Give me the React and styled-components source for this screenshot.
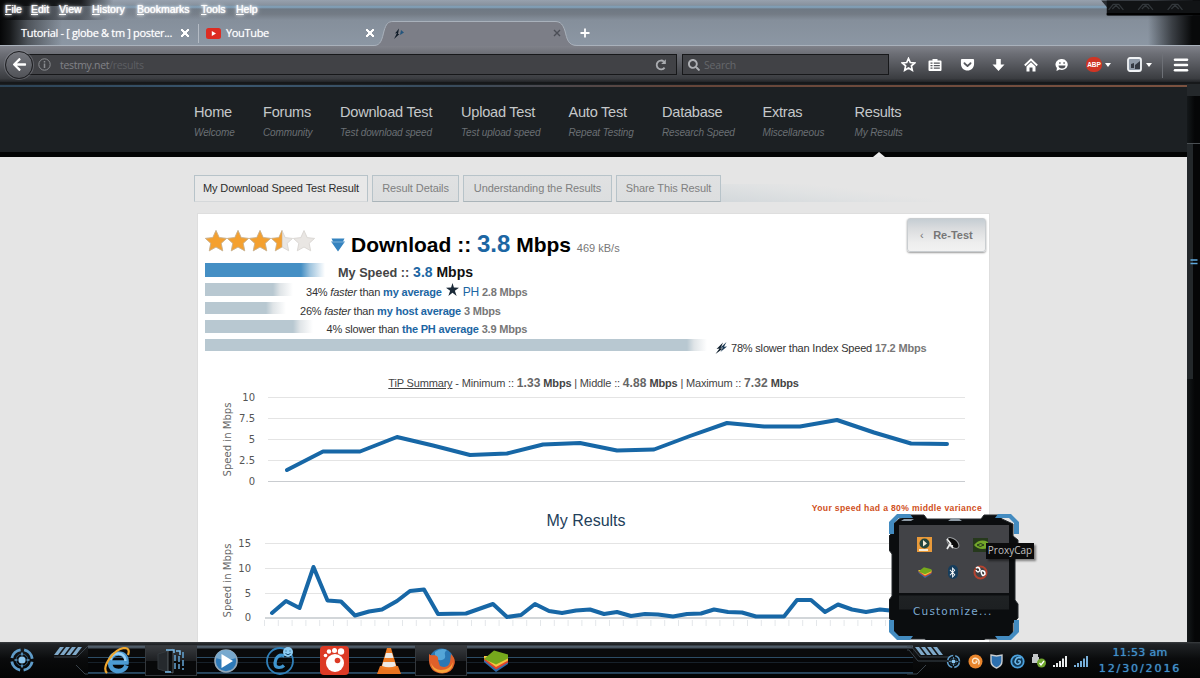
import React from 'react';
import styled, { createGlobalStyle } from 'styled-components';
import { Menu } from 'lucide-react';
import { FaArrowLeft, FaGetPocket, FaBluetoothB, FaSearch } from 'react-icons/fa';

const menus = [
  ['File', 26],
  ['Edit', 28],
  ['View', 33],
  ['History', 45],
  ['Bookmarks', 64],
  ['Tools', 35],
  ['Help', 30],
];

const navItems = [
  ['Home', 'Welcome'],
  ['Forums', 'Community'],
  ['Download Test', 'Test download speed'],
  ['Upload Test', 'Test upload speed'],
  ['Auto Test', 'Repeat Testing'],
  ['Database', 'Research Speed'],
  ['Extras', 'Miscellaneous'],
  ['Results', 'My Results'],
];

const speedPoints =
  '287,73 323,54.5 360,54.5 397,40 433,48.5 470,58 507,56.5 543,47.5 580,46 617,53.5 654,52.5 690,39 727,26 764,29.5 800,29.5 837,23 874,35.5 911,46.5 947,47';

const historyPoints =
  '272,73 286,61 299.5,68 313.5,27 327.5,60.5 341,61.5 355,75.5 369,71.5 382,69.5 397,61 410,51 424,49.5 438,74 466,73.5 493,64 507,77 521,75 535,64 549,71 562,73 576,70.5 590,69.5 604,74 617,72 631,76 645,74 658,74.5 673,76.5 687,74 701,73.5 714,69.5 728,72 742,72.5 756,76.5 784,76.5 797,60 811,60 825,72 838,64.5 852,69.5 866,72 880,69.5 895,71';

const TestIcon = ({ size = 12 }) => (
  <svg width={size} height={size} viewBox='0 0 12 12'>
    <path d='M8 0.5 L1.5 7 L4.5 6.5 L0.5 12 L8 6.5 L5.5 6.5 Z' fill='#10202e' />
    <path d='M11.5 0 L5 6 L8 5.6 L5.5 10 L12 4.6 L9 4.8 Z' fill='#1b3a55' />
  </svg>
);

const starPath = 'M11 0.5 L14.2 7.6 L21.6 8.4 L16.2 13.3 L17.7 20.8 L11 17 L4.3 20.8 L5.8 13.3 L0.4 8.4 L7.8 7.6 Z';
const thinStarPath = 'M11 0 L13.4 7.8 L22 8 L15 13 L18 22 L11 16.4 L4 22 L7 13 L0 8 L8.6 7.8 Z';

const Star = ({ fill }) => (
  <svg width='22' height='22' viewBox='0 0 22 22'>
    <path d={starPath} fill='#e9e6e3' stroke='#d6d2ce' strokeWidth='0.8' />
    {fill === 1 && <path d={starPath} fill='#f4a02f' stroke='#c9b08b' strokeWidth='0.8' />}
    {fill === 0.5 && (
      <path d='M11 0.5 L7.8 7.6 L0.4 8.4 L5.8 13.3 L4.3 20.8 L11 17 Z' fill='#f4a02f' stroke='#c9b08b' strokeWidth='0.6' />
    )}
  </svg>
);

const TargetIcon = ({ size }) => (
  <svg width={size} height={size} viewBox='0 0 26 26' fill='none'>
    <circle cx='13' cy='13' r='10.3' stroke='#5f9cc9' strokeWidth='2.8' strokeDasharray='12.6 3.6' strokeDashoffset='-1.8' />
    <circle cx='13' cy='13' r='6' stroke='#29597c' strokeWidth='1' />
    <circle cx='13' cy='13' r='3.6' fill='#8cc6ee' />
    <path d='M13 5.5v3M13 17.5v3M5.5 13h3M17.5 13h3' stroke='#5f9cc9' strokeWidth='1.6' />
  </svg>
);

const BlueStacks = ({ width, height }) => (
  <svg width={width} height={height} viewBox='0 0 26 22' preserveAspectRatio='none'>
    <path d='M1 12 L13 22 L25 14 V10 L1 8 Z' fill='#2f6aa8' />
    <path d='M1 10 L13 19.5 L25 12.5 V8 L1 7 Z' fill='#e2432a' />
    <path d='M1 8 L13 17 L25 10.5 V6 L1 6 Z' fill='#f4c542' />
    <path d='M1 9 L11 0.5 L25 4.5 V8.5 L13 14.5 Z' fill='#76a91c' />
  </svg>
);

const Signal = ({ color }) => (
  <svg width='14' height='11' viewBox='0 0 14 11' fill={color}>
    <path d='M0 9h2v2h-2zM3 7h2v4h-2zM6 5h2v6h-2zM9 2.5h2v8.5h-2zM12 0h2v11h-2z' />
  </svg>
);

const App = () => {
  return (
    <>
      <GlobalStyle />
      <Desktop>
        <TitleArea>
          <MenuBar>
            {menus.map(([label, width]) => (
              <MenuItem key={label} $width={width}>
                <u>{label[0]}</u>
                {label.slice(1)}
              </MenuItem>
            ))}
          </MenuBar>
          <WindowButtons>
            <svg width='104' height='16' viewBox='0 0 104 16'>
              <path d='M0 0h104v16H12V8L5 0z' transform='translate(-8 0)' fill='#2b2f34' />
              <path d='M3 0h101v16H3z' fill='#111315' />
              <path d='M3 14.5h101' stroke='#000' strokeWidth='2' />
              <g fill='none' stroke='#32373b' strokeWidth='1.4'>
                <path d='M5 10l5-6h6l5 6M37 10l5-6h6l5 6M69 10l5-6h6l5 6' />
                <path d='M9 9l4-4 4 4M41 9l4-4 4 4M73 9l4-4 4 4' />
              </g>
            </svg>
          </WindowButtons>
          <TabStrip>
            <BrowserTab $width={198} $left={21} $right={9}>
              <TabLabel>Tutorial - [ globe &amp; tm ] poster...</TabLabel>
              <CloseMark />
            </BrowserTab>
            <TabDivider />
            <BrowserTab $width={175} $left={7} $right={0}>
              <svg width='15' height='11' viewBox='0 0 15 11'>
                <rect width='15' height='11' rx='2.5' fill='#dd2c22' />
                <path d='M5.8 3 L10 5.5 L5.8 8 Z' fill='#fff' />
              </svg>
              <TabLabel $gap={5}>YouTube</TabLabel>
              <CloseMark />
            </BrowserTab>
            <ActiveTab>
              <svg width='208' height='26' viewBox='0 0 208 26'>
                <path d='M0 25.5 C7 25.5 8 19 10 11 C12 4 14 1.5 19 1.5 H181 C187 1.5 189 5 191 11 C193 19 194 25.5 203 25.5 H208 V26 H0 Z' fill='#7c7e87' />
                <path d='M0 25.500 C7 25.500 8 19 10 11 C12 4 14 1.500 19 1.500 H181 C187 1.500 189 5 191 11 C193 19 194 25.500 203 25.500 H208' fill='none' stroke='#a9b1bb' />
                <path d='M7 .5L3 5.500 5 5 2 11 7.500 6 6 6z' transform='translate(18 8)' fill='#111c28' />
                <path d='M9 2l3 2.500L8 7z' transform='translate(18 8)' fill='#24557d' />
                <path d='M180 10l6 6M186 10l-6 6' stroke='#4b4e56' strokeWidth='1.4' />
              </svg>
            </ActiveTab>
            <NewTab>
              <svg width='10' height='10' viewBox='0 0 10 10'>
                <path d='M5 0.5v9M0.5 5h9' stroke='#fff' strokeWidth='1.8' />
              </svg>
            </NewTab>
          </TabStrip>
        </TitleArea>

        <Toolbar>
          <BackButton>
            <FaArrowLeft size={15} />
          </BackButton>
          <AddressBar>
            <svg width='13' height='13' viewBox='0 0 13 13' fill='none' stroke='#8b8d91'>
              <circle cx='6.5' cy='6.5' r='5.7' />
              <path d='M6.5 5.5v4.5M6.5 3v1.4' strokeWidth='1.5' />
            </svg>
            <Address>
              testmy.net<span>/results</span>
            </Address>
            <svg width='12' height='12' viewBox='0 0 12 12' fill='none' stroke='#aaacb0' strokeWidth='1.8'>
              <path d='M9.6 8.6 A4.4 4.4 0 1 1 9 2.6' />
              <path d='M10.8 0.3v4.6H6.2z' fill='#aaacb0' stroke='none' />
            </svg>
          </AddressBar>
          <SearchBar>
            <FaSearch size={12} color='#aeb0b4' />
            <span>Search</span>
          </SearchBar>
          <ToolIcons>
            <svg width='15' height='15' viewBox='0 0 15 15' fill='none' stroke='#fff' strokeWidth='1.7'>
              <path d='M7.5 1.5 L9.3 5.5 L13.6 6 L10.4 8.9 L11.3 13.2 L7.5 11 L3.7 13.2 L4.6 8.9 L1.4 6 L5.7 5.5 Z' />
            </svg>
            <svg width='14' height='14' viewBox='0 0 14 14'>
              <path d='M1.5 2.5h3V1h5v1.5h3q1 0 1 1v8.5q0 1-1 1h-11q-1 0-1-1v-8.5q0-1 1-1z' fill='#fff' />
              <path d='M2.5 5.2h2M2.5 7.7h2M2.5 10.2h2M5.8 5.2h6M5.8 7.7h6M5.8 10.2h6' stroke='#54565b' strokeWidth='1.2' />
            </svg>
            <FaGetPocket size={15} />
            <svg width='13' height='14' viewBox='0 0 13 14'>
              <path d='M4.2 1h4.6v5.500H12.500L6.500 13 0.500 6.500h3.700z' fill='#fff' />
            </svg>
            <svg width='14' height='14' viewBox='0 0 14 14'>
              <path d='M0.800 7.500L7 1.500l6.200 6' fill='none' stroke='#fff' strokeWidth='1.900' />
              <path d='M2.500 8.500L7 4.300l4.500 4.200V13.500H8.500V9.500h-3v4h-3z' fill='#fff' />
            </svg>
            <svg width='14' height='14' viewBox='0 0 14 14'>
              <path d='M7 1a6 5.5 0 1 1-2.5 10.6L1.5 13l.4-3A5.7 5.5 0 0 1 7 1z' fill='#fff' />
              <path d='M4.2 4.2h1.4v1.600h-1.400zM8.400 4.200h1.400v1.600h-1.400zM3.500 7.500h7a3.500 3 0 0 1-7 0z' fill='#4f5156' />
            </svg>
          </ToolIcons>
          <AdBlock>ABP</AdBlock>
          <Caret $left={3} />
          <AddonBox>
            <svg width='15' height='15' viewBox='0 0 15 15'>
              <rect x='1' y='1' width='13' height='13' rx='2' fill='#8f9aa8' stroke='#f1f3f5' strokeWidth='1.8' />
              <path d='M4 7l3-1v5H4zM8 8l5-4v8H8z' fill='#343a44' />
            </svg>
          </AddonBox>
          <Caret $left={4} />
          <ToolDivider />
          <Menu size={18} strokeWidth={3.4} />
        </Toolbar>

        <Viewport>
          <Page>
            <SiteHeader>
              {navItems.map(([title, hint]) => (
                <NavItem key={title}>
                  <NavTitle>{title}</NavTitle>
                  <NavHint>{hint}</NavHint>
                  {title === 'Results' && <Pointer />}
                </NavItem>
              ))}
            </SiteHeader>

            <ResultTabs>
              <ResultTab $active $width={174}>My Download Speed Test Result</ResultTab>
              <ResultTab $width={87}>Result Details</ResultTab>
              <ResultTab $width={149}>Understanding the Results</ResultTab>
              <ResultTab $width={105}>Share This Result</ResultTab>
              <TabShade />
            </ResultTabs>

            <Card>
              <ScoreRow>
                <Stars>
                  {[1, 1, 1, 0.5, 0].map((fill, i) => (
                    <Star key={i} fill={fill} />
                  ))}
                </Stars>
                <DownArrow width='14' height='14' viewBox='0 0 14 14'>
                  <path d='M0.5 0.5h13l-1.5 3h2L7 13.5L0 3.5h2z' fill='#3583bf' />
                  <path d='M1 4h12' stroke='#8fbde0' strokeWidth='0.8' />
                </DownArrow>
                <Score>
                  Download :: <b>3.8</b> Mbps <small>469 kB/s</small>
                </Score>
                <Retest>
                  <i>‹</i>Re-Test
                </Retest>
              </ScoreRow>
              <MySpeed>
                <Bar $width={120} $main />
                <MySpeedText>
                  <span>My Speed ::</span> <em>3.8</em> Mbps
                </MySpeedText>
              </MySpeed>
              <Compare>
                <Bar $width={88} />
                <CompareText $left={13}>
                  34% <i>faster</i> than <b>my average</b>
                  <svg width='13' height='13' viewBox='0 0 22 22'>
                    <path d={thinStarPath} fill='#1b2a38' />
                  </svg>
                  <a>PH</a> <strong>2.8 Mbps</strong>
                </CompareText>
              </Compare>
              <Compare>
                <Bar $width={81} />
                <CompareText $left={14}>
                  26% <i>faster</i> than <b>my host average</b> <strong>3 Mbps</strong>
                </CompareText>
              </Compare>
              <Compare>
                <Bar $width={108} />
                <CompareText $left={13.5}>
                  4% slower than <b>the PH average</b> <strong>3.9 Mbps</strong>
                </CompareText>
              </Compare>
              <Compare>
                <Bar $width={502} />
                <IndexIcon>
                  <TestIcon />
                </IndexIcon>
                <CompareText $left={4}>
                  78% slower than Index Speed <strong>17.2 Mbps</strong>
                </CompareText>
              </Compare>

              <Summary>
                <u>TiP Summary</u> - Minimum :: <b>1.33</b> <strong>Mbps</strong> | Middle :: <b>4.88</b>{' '}
                <strong>Mbps</strong> | Maximum :: <b>7.32</b> <strong>Mbps</strong>
              </Summary>

              <Chart width='791' height='98' viewBox='198 -5 791 98'>
                <path d='M268 0.5H965M268 21.5H965M268 42.5H965M268 63.5H965' stroke='#e4e4e4' />
                <path d='M268 84.5H965' stroke='#c9ccd0' />
                <ChartLabel x='255' y='4'>10</ChartLabel>
                <ChartLabel x='255' y='25'>7.5</ChartLabel>
                <ChartLabel x='255' y='46'>5</ChartLabel>
                <ChartLabel x='255' y='67'>2.5</ChartLabel>
                <ChartLabel x='255' y='88'>0</ChartLabel>
                <AxisTitle transform='translate(231 42.5) rotate(-90)'>Speed in Mbps</AxisTitle>
                <polyline points={speedPoints} />
              </Chart>

              <Variance>Your speed had a 80% middle variance</Variance>
              <ChartTitle>My Results</ChartTitle>

              <Chart width='791' height='100' viewBox='198 -5 791 100'>
                <path d='M265 3.5H965M265 28.5H965M265 53.5H965' stroke='#e4e4e4' />
                <path d='M265 78H965' stroke='#c3c8cc' strokeWidth='1.5' />
                {Array.from({ length: 48 }, (_, i) => (
                  <path key={i} d={`M${264.5 + i * 13.8} 80v6`} stroke='#e4e7ea' />
                ))}
                <ChartLabel x='251' y='7'>15</ChartLabel>
                <ChartLabel x='251' y='32'>10</ChartLabel>
                <ChartLabel x='251' y='57'>5</ChartLabel>
                <ChartLabel x='251' y='81'>0</ChartLabel>
                <AxisTitle transform='translate(231 40.5) rotate(-90)'>Speed in Mbps</AxisTitle>
                <polyline points={historyPoints} />
              </Chart>
            </Card>
          </Page>
          <ScrollTrack>
            <ScrollCap />
            <ScrollThumb>
              <svg width='8' height='6' viewBox='0 0 8 6'>
                <path d='M0.5 1h7M0.5 4.5h7' stroke='#5fa8dc' strokeWidth='1.6' />
              </svg>
            </ScrollThumb>
          </ScrollTrack>
        </Viewport>

        <Taskbar>
          <StartButton>
            <TargetIcon size={26} />
          </StartButton>
          <TaskRail>
            <svg width='34' height='36' viewBox='0 0 34 36'>
              <g fill='#7fa9c9'>
                <path d='M6 5h4l-6 8H0zM12 5h4l-6 8H6zM18 5h4l-6 8h-4zM24 5h4l-6 8h-4z' />
              </g>
              <path d='M34 4 L23 15 H0 M22 23 L31 32 H34' fill='none' stroke='#39424a' />
            </svg>
          </TaskRail>
          <TaskList>
            <TaskButton $width={57}>
              <svg width='28' height='28' viewBox='0 0 28 28' fill='none'>
                <path d='M23.5 18.5 C22 22.5 19 24 15.5 24 C10 24 7 20.5 7 15.5 C7 10 10.500 6.500 15.500 6.500 C21 6.500 24 10 23.500 15.500 H9' stroke='#4c9bd3' strokeWidth='4.6' />
                <path d='M22.500 14 C22.500 9 19 6.500 15.500 6.500 C11 6.500 8 9 7.500 13' stroke='#9ad0f2' strokeWidth='2.400' />
                <path d='M4 26 C-2 20 11 2 21 1 C26 1 26.500 4 25 8' stroke='#efa72e' strokeWidth='2.200' />
              </svg>
            </TaskButton>
            <TaskButton $width={52} $open>
              <svg width='28' height='26' viewBox='0 0 28 26'>
                <path d='M1 6l10-3v21L1 21z' fill='#25292d' stroke='#33383c' />
                <path d='M11 3l5-2v24l-5-2z' fill='#0b0d0f' stroke='#50565b' />
                <path d='M9 2h8v3M8 24h6M19 3h4v4' fill='none' stroke='#78b9e8' strokeWidth='1.5' />
                <path d='M18 7v15M22 8v13M26 4v18' fill='none' stroke='#5f9cc9' strokeWidth='1.6' strokeDasharray='6 2' />
              </svg>
            </TaskButton>
            <TaskButton $width={58}>
              <svg width='24' height='24' viewBox='0 0 24 24'>
                <circle cx='12' cy='12' r='11' fill='#2d79b8' stroke='#94a8b8' strokeWidth='1.6' />
                <path d='M2 9a10 8 0 0 1 20 0q-10 4-20 0' fill='#78a9ce' />
                <path d='M7.5 5 L19 12 L7.5 19 Z' fill='#fff' />
              </svg>
            </TaskButton>
            <TaskButton $width={50}>
              <svg width='30' height='30' viewBox='0 0 30 30' fill='none'>
                <circle cx='15' cy='15' r='13' stroke='#2f7fb8' strokeWidth='1.8' />
                <path d='M19.500 10 Q14 7.500 11 13 Q8 21 14 21.500 Q17 21.500 19 19.500' stroke='#3f96d0' strokeWidth='3.2' />
                <circle cx='23' cy='6' r='5' fill='#8ccbf2' />
                <path d='M21 4.5v1M25 4.5v1M20.5 7.5q2.5 2.5 5 0' stroke='#174a70' />
              </svg>
            </TaskButton>
            <TaskButton $width={58}>
              <svg width='29' height='29' viewBox='0 0 29 29'>
                <rect width='29' height='29' rx='4' fill='#dc3a25' />
                <circle cx='15' cy='17' r='9' fill='#fff' />
                <circle cx='17.5' cy='14.500' r='2.8' fill='#dc3a25' />
                <g fill='#fff'>
                  <circle cx='5.500' cy='9.500' r='1.800' />
                  <circle cx='9' cy='5.500' r='2.200' />
                  <circle cx='14.500' cy='4.500' r='2.500' />
                  <circle cx='21' cy='5.500' r='3.200' />
                </g>
              </svg>
            </TaskButton>
            <TaskButton $width={52}>
              <svg width='24' height='28' viewBox='0 0 24 28'>
                <path d='M3 19h18l3 8H0z' fill='#e87420' />
                <path d='M10 1h4l6 20q-8 4-16 0z' fill='#ef7c24' />
                <path d='M9 6h6l1.5 5h-9zM6.3 15h11.4l1.2 4q-7 2.5-13.8 0z' fill='#eceae6' />
              </svg>
            </TaskButton>
            <TaskButton $width={52} $open>
              <svg width='27' height='27' viewBox='0 0 27 27'>
                <circle cx='13.5' cy='13.5' r='12' fill='#2b78b4' />
                <path d='M7 5q6-5 12-2-3 2-2 5 1 4-3 5-5 1-7-4z' fill='#54a6d8' />
                <path d='M1 7Q3 9 6 8q5 1 4 5l2 6q8 3 10-4l1-8q5 5 3.500 10-2 9-12 9.500Q2 26 1 14z' fill='#e0602a' />
                <path d='M3 16q3 7 10 7 9 0 12-8-1 11-11 11Q4 25 3 16z' fill='#f7a53a' />
              </svg>
            </TaskButton>
            <TaskButton $width={58}>
              <BlueStacks width={26} height={22} />
            </TaskButton>
          </TaskList>
          <RailEnd width='44' height='36' viewBox='0 0 44 36'>
            <g fill='#7fa9c9'>
              <path d='M14 5h4l6 8h-4zM20 5h4l6 8h-4zM26 5h4l6 8h-4zM8 5h4l6 8h-4z' />
            </g>
            <path d='M0 4 h4 L13 15 H44 M19 23 L10 32 H0 M0 8H2L11 19H44' fill='none' stroke='#39424a' />
          </RailEnd>
          <Tray>
            <TargetIcon size={15} />
            <svg width='15' height='15' viewBox='0 0 15 15' fill='none'>
              <circle cx='7.5' cy='7.5' r='7' fill='#e9852c' />
              <path d='M7.5 7.5q2-1 1 1-3 2-4-1 0-4 4-3 4 2 2 6' stroke='#fde6c8' strokeWidth='1.4' />
            </svg>
            <svg width='13' height='15' viewBox='0 0 13 15'>
              <path d='M1 1l5.5 1L12 1v6q0 5-5.500 7Q1 12 1 7z' fill='#2c6fae' stroke='#c7ccd0' strokeWidth='1.4' />
            </svg>
            <svg width='15' height='15' viewBox='0 0 15 15' fill='none'>
              <circle cx='7.5' cy='7.5' r='6.2' fill='#123753' stroke='#4aa0dc' strokeWidth='1.8' />
              <path d='M11 4q-5-2-6 4 2 4 5 1 1-3-2-2' stroke='#6bb9ec' strokeWidth='1.6' />
            </svg>
            <svg width='14' height='14' viewBox='0 0 14 14'>
              <path d='M1 3V0h5v3h1v6H0V3z' fill='#c3c6c8' />
              <circle cx='9.5' cy='9' r='4.5' fill='#70a62d' />
              <path d='M7.5 9l1.5 2 3-4' stroke='#fff' fill='none' strokeWidth='1.3' />
            </svg>
            <Signal color='#e9ebec' />
            <Signal color='#77aed8' />
          </Tray>
          <Clock>
            <span>11:53 am</span>
            <span>12/30/2016</span>
          </Clock>
        </Taskbar>

        <TrayPopup>
          <PopupFrame width='130' height='126' viewBox='0 0 130 126'>
            <path d='M20 1h15l3 4h54l3-4h15l3 4 11 5v12l5 4v14l-3 4v42l3 4v14l-5 5v10l-7 6H96l-3 4H39l-3-4H10l-6-6v-10l-4-5V86l3-4V40l-3-4V22l4-4V10l6-5z' fill='#0b0d0f' stroke='#25292c' />
            <path d='M8 0h13l3 4H10L5 9v11H0V8zM122 0h-13l-3 4h14l5 5v11h5V8zM8 126h13l3-4H10l-5-5v-11H0v12zM122 126h-13l-3-4h14l5-5v-11h5v12z' fill='#438bc0' />
            <path d='M12 7l3-2h10l-3 2zM59 7l4-3h6l4 3z' fill='#8f9ba5' />
          </PopupFrame>
          <PopupIcons>
            <svg width='15' height='15' viewBox='0 0 15 15'>
              <rect width='15' height='15' fill='#e99a3a' />
              <circle cx='7.5' cy='6.500' r='5' fill='#24463e' />
              <path d='M6 3l4 3.5-4 3zM2 12h9v2H2z' fill='#f5ecd7' />
            </svg>
            <svg width='15' height='15' viewBox='0 0 15 15'>
              <ellipse cx='8' cy='6' rx='7' ry='4' transform='rotate(40 8 6)' fill='#0b0b0b' stroke='#9a9da0' />
              <path d='M2 2l4 5M2 12l3-5 3 4M4 8l4 1' stroke='#eceded' strokeWidth='1.7' fill='none' />
            </svg>
            <svg width='15' height='14' viewBox='0 0 15 14'>
              <rect width='15' height='14' fill='#26391c' />
              <path d='M1 7q6-7 14-3v6Q6 13 1 7z' fill='#73a72a' />
              <path d='M4 7q4-3 7 0-4 3-7 0z' fill='none' stroke='#26391c' />
            </svg>
            <BlueStacks width={14} height={11} />
            <BlueToothBadge>
              <FaBluetoothB size={11} />
            </BlueToothBadge>
            <svg width='15' height='15' viewBox='0 0 15 15' fill='none'>
              <circle cx='7.5' cy='7.5' r='6' stroke='#b4432f' strokeWidth='2' />
              <path d='M3 3q3-2 4 2-2 4-4 0M8 6q4-1 4 3-3 4-4-3' fill='#333' stroke='#fff' strokeWidth='1.6' />
            </svg>
          </PopupIcons>
          <Customize>Customize...</Customize>
          <Tooltip>ProxyCap</Tooltip>
        </TrayPopup>
      </Desktop>
    </>
  );
};

const GlobalStyle = createGlobalStyle`
  * {
    box-sizing: border-box;
  }
  body {
    margin: 0;
    overflow: hidden;
    font-family: 'Liberation Sans', Arial, sans-serif;
  }
  svg {
    display: block;
    flex: none;
  }
`;
const Desktop = styled.div`
  position: relative;
  width: 1200px;
  height: 678px;
  display: flex;
  flex-direction: column;
  overflow: hidden;
  background: #000;
`;
const TitleArea = styled.div`
  position: relative;
  height: 46px;
  flex: none;
  background:
    linear-gradient(90deg, #050607 0, #17191b 10px, rgba(60, 64, 69, 0.75) 28px, rgba(139, 149, 162, 0) 62px, rgba(139, 149, 162, 0) 1148px, rgba(40, 43, 47, 0.8) 1172px, #08090a 1192px),
    linear-gradient(#97a1ae 0, #88929e 5px, #7d95a8 6px, #83a6c1 7px, #6e7883 9px, #737b85 14px, #858f9b 20px, #8c97a4 46px);
`;
const MenuBar = styled.div`
  height: 20px;
  display: flex;
  padding: 2px 0 0 5px;
  background:
    linear-gradient(90deg, transparent 10px, rgba(139, 149, 162, 0.55) 60px, rgba(139, 149, 162, 0) 250px) 0 6px / 100% 14px no-repeat,
    linear-gradient(100deg, #060708 0, #1b1d20 80px, rgba(80, 86, 94, 0.4) 105px, rgba(120, 128, 138, 0) 112px);
`;
const MenuItem = styled.span`
  width: ${({ $width }) => $width}px;
  font-size: 10.5px;
  line-height: 14px;
  color: #fff;
  text-shadow: 0 0 1px #fff, 0 0 3px #fff, 0 0 5px #d5dde6;
  white-space: nowrap;
`;
const WindowButtons = styled.div`
  position: absolute;
  top: 0;
  right: 0;
  svg {
    width: 96px;
    overflow: visible;
  }
`;
const TabStrip = styled.div`
  height: 26px;
  display: flex;
  align-items: center;
  box-shadow: inset 0 -1px #aab2bc;
`;
const BrowserTab = styled.div`
  width: ${({ $width }) => $width}px;
  height: 26px;
  padding: 0 ${({ $right }) => $right}px 0 ${({ $left }) => $left}px;
  display: flex;
  align-items: center;
  flex: none;
`;
const TabLabel = styled.span`
  margin-left: ${({ $gap = 0 }) => $gap}px;
  font: 11px/26px 'Open Sans', 'Noto Sans', sans-serif;
  letter-spacing: -0.33px;
  color: #fff;
  white-space: nowrap;
  text-shadow: 0 0 1px rgba(255, 255, 255, 0.7);
`;
const CloseMark = styled.i`
  width: 8px;
  height: 8px;
  margin-left: auto;
  background:
    linear-gradient(45deg, transparent 39%, #fff 41%, #fff 59%, transparent 61%),
    linear-gradient(-45deg, transparent 39%, #fff 41%, #fff 59%, transparent 61%);
`;
const TabDivider = styled.i`
  width: 1px;
  height: 19px;
  background: #b4bbc4;
`;
const ActiveTab = styled.div`
  height: 26px;
  width: 206px;
`;
const NewTab = styled.div`
  z-index: 1;
`;
const Toolbar = styled.div`
  height: 38px;
  flex: none;
  display: flex;
  align-items: center;
  padding: 1px 0 0 5px;
  color: #fff;
  border-bottom: 2px solid #16181a;
  background: linear-gradient(#80828a, #6c6e75 22%, #4b4d52 68%, #3b3d41 90%, #222427);
`;
const BackButton = styled.div`
  z-index: 1;
  width: 28px;
  height: 28px;
  flex: none;
  display: flex;
  align-items: center;
  justify-content: center;
  border: 1px solid #1e1f22;
  border-radius: 50%;
  background: linear-gradient(#76787f, #505257);
  box-shadow: 0 0 0 1px rgba(150, 153, 160, 0.4);
`;
const AddressBar = styled.div`
  width: 650px;
  height: 21px;
  margin-left: -6px;
  padding: 0 9px 0 10px;
  display: flex;
  align-items: center;
  flex: none;
  background: #414246;
  border: 1px solid #17181a;
`;
const Address = styled.span`
  flex: 1;
  margin-left: 9px;
  font: 10.5px 'Open Sans', 'Noto Sans', sans-serif;
  letter-spacing: -0.3px;
  color: #818388;
  span {
    color: #5d5f63;
  }
`;
const SearchBar = styled.div`
  width: 207px;
  height: 21px;
  margin-left: 5px;
  padding-left: 5px;
  display: flex;
  align-items: center;
  gap: 4px;
  flex: none;
  background: #414246;
  border: 1px solid #17181a;
  font: 10.5px 'Open Sans', 'Noto Sans', sans-serif;
  letter-spacing: -0.2px;
  color: #66686c;
`;
const ToolIcons = styled.div`
  margin-left: 6px;
  display: grid;
  grid-template-columns: 26.5px 27px 37px 25px 40px 23px;
  align-items: center;
  justify-items: center;
`;
const AdBlock = styled.span`
  width: 16px;
  height: 15px;
  margin-left: 12.5px;
  border-radius: 7px;
  background: #cf3524;
  font-size: 6.5px;
  font-weight: bold;
  line-height: 15px;
  text-align: center;
`;
const Caret = styled.i`
  margin-left: ${({ $left }) => $left}px;
  border: 3px solid transparent;
  border-top: 4px solid #fff;
  border-bottom: 0;
`;
const AddonBox = styled.div`
  margin-left: 16px;
`;
const ToolDivider = styled.i`
  width: 1px;
  height: 26px;
  margin: 0 9px 0 10px;
  background: #6d7076;
`;
const Viewport = styled.div`
  height: 558px;
  flex: none;
  display: flex;
`;
const Page = styled.div`
  width: 1187px;
  height: 558px;
  overflow: hidden;
  background: #e5e5e5;
`;
const SiteHeader = styled.div`
  height: 73px;
  display: grid;
  grid-template-columns: 69px 77px 121px 107.5px 93.5px 100.5px 92px 80px;
  padding: 18px 0 0 194px;
  border-bottom: 5px solid #030404;
  background:
    linear-gradient(90deg, #2c4356, #3a566e 20%, #384b5c 38%, #654539 58%, #7b5240) 0 1px / 100% 2px no-repeat,
    #1c2023;
`;
const NavItem = styled.div`
  position: relative;
`;
const NavTitle = styled.div`
  font-size: 14.6px;
  line-height: 21px;
  letter-spacing: -0.25px;
  color: #c5c8ca;
  white-space: nowrap;
`;
const NavHint = styled.div`
  margin-top: 2px;
  font-size: 10px;
  line-height: 15px;
  letter-spacing: -0.12px;
  font-style: italic;
  color: #6a6f73;
  white-space: nowrap;
`;
const Pointer = styled.i`
  position: absolute;
  top: 50px;
  left: 18px;
  border: 6px solid transparent;
  border-top: 0;
  border-bottom: 5px solid #ececec;
`;
const ResultTabs = styled.div`
  height: 27px;
  margin: 18px 0 0 194px;
  display: flex;
  gap: 4px;
`;
const ResultTab = styled.div`
  width: ${({ $width }) => $width}px;
  height: 27px;
  flex: none;
  font-size: 11px;
  letter-spacing: -0.09px;
  line-height: 24px;
  text-align: center;
  white-space: nowrap;
  color: ${({ $active }) => ($active ? '#2c2c2c' : '#808080')};
  background: ${({ $active }) => ($active ? '#e8e8e8' : 'linear-gradient(#e0e1e2, #dcdedf)')};
  border: 1px solid #b7c3c9;
  border-bottom-color: ${({ $active }) => ($active ? '#d5d8da' : '#aab4b9')};
`;
const TabShade = styled.div`
  width: 250px;
  height: 18px;
  margin: 9px 0 0 -4px;
  background: linear-gradient(7deg, #d3d8db, #e0e2e3 40%, #e5e5e5 60%);
`;
const Card = styled.div`
  width: 791px;
  height: 430px;
  margin: 12px 0 0 198px;
  background: #fff;
  box-shadow: 0 0 0 1px #dedede;
`;
const ScoreRow = styled.div`
  position: relative;
  height: 49px;
  display: flex;
  padding-left: 7px;
`;
const Stars = styled.div`
  display: flex;
  padding-top: 16px;
`;
const DownArrow = styled.svg`
  margin: 24px 0 0 16px;
`;
const Score = styled.div`
  margin-left: 6px;
  padding-top: 14px;
  font-size: 21px;
  font-weight: bold;
  line-height: 31px;
  white-space: nowrap;
  b {
    font-size: 24px;
    color: #1c66a3;
  }
  small {
    font-size: 11px;
    font-weight: normal;
    color: #777;
  }
`;
const Retest = styled.div`
  position: absolute;
  top: 4px;
  right: 3px;
  width: 79px;
  height: 34px;
  border: 1px solid #c9cdd0;
  border-radius: 3px;
  font-size: 11px;
  font-weight: bold;
  line-height: 32px;
  padding-left: 12px;
  color: #777;
  background: linear-gradient(#c5cdd3, #dadcde 30%, #eee 75%, #f2f2f2);
  box-shadow: 0 1px 2px rgba(0, 0, 0, 0.4);
  i {
    margin-right: 9.5px;
    font-style: normal;
    font-weight: normal;
  }
`;
const MySpeed = styled.div`
  height: 20px;
  display: flex;
  padding-left: 7px;
`;
const Bar = styled.div`
  width: ${({ $width }) => $width}px;
  height: ${({ $main }) => ($main ? 14 : 12.5)}px;
  flex: none;
  background: ${({ $main }) =>
    $main
      ? 'linear-gradient(90deg, #458fc4 calc(100% - 24px), #9fc4de calc(100% - 15px), #fff)'
      : 'linear-gradient(90deg, #b8c8d1 calc(100% - 20px), #dfe4e7 calc(100% - 13px), #fff)'};
`;
const MySpeedText = styled.div`
  margin-left: 13px;
  font-size: 14px;
  font-weight: bold;
  line-height: 19px;
  white-space: nowrap;
  color: #111;
  span {
    font-size: 12.7px;
    color: #444;
  }
  em {
    font-style: normal;
    color: #1c66a3;
  }
`;
const Compare = styled.div`
  height: 18.6px;
  display: flex;
  padding-left: 7px;
`;
const CompareText = styled.div`
  margin: 1px 0 0 ${({ $left }) => $left}px;
  font-size: 11px;
  letter-spacing: -0.19px;
  line-height: 16px;
  white-space: nowrap;
  color: #333;
  b {
    color: #1c66a3;
  }
  strong {
    color: #777;
  }
  a {
    font-size: 12px;
    color: #1c66a3;
  }
  svg {
    display: inline-block;
    margin: -5px 4px 0;
  }
`;
const IndexIcon = styled.div`
  margin: 3px 0 0 8px;
`;
const Summary = styled.div`
  height: 18px;
  margin-top: 17px;
  font-size: 11px;
  letter-spacing: -0.17px;
  line-height: 18px;
  text-align: center;
  white-space: nowrap;
  color: #444;
  b {
    font-size: 12px;
    letter-spacing: 0.1px;
    color: #666;
  }
`;
const Chart = styled.svg`
  polyline {
    fill: none;
    stroke: #1767a6;
    stroke-width: 4;
    stroke-linecap: round;
    stroke-linejoin: round;
  }
`;
const ChartLabel = styled.text`
  font: 10px 'DejaVu Sans', sans-serif;
  fill: #555;
  text-anchor: end;
`;
const AxisTitle = styled.text`
  font: 10.1px 'DejaVu Sans', sans-serif;
  fill: #666;
  text-anchor: middle;
`;
const Variance = styled.div`
  height: 10px;
  margin-top: 13px;
  padding-right: 7px;
  font: bold 8.6px/10px 'Liberation Sans', Arial, sans-serif;
  letter-spacing: 0.34px;
  text-align: right;
  color: #d0501c;
`;
const ChartTitle = styled.div`
  height: 22px;
  padding-right: 15px;
  font-size: 16px;
  line-height: 16px;
  text-align: center;
  color: #23405a;
`;
const ScrollTrack = styled.div`
  width: 13px;
  background: linear-gradient(90deg, #14181a, #050607 60%);
`;
const ScrollCap = styled.div`
  height: 59px;
  border-top: 12px solid #24282b;
`;
const ScrollThumb = styled.div`
  height: 236px;
  display: flex;
  align-items: center;
  justify-content: center;
  border-top: 1px solid #4a4f53;
  background: linear-gradient(90deg, #23282b 45%, #050607 50%);
`;
const Taskbar = styled.div`
  height: 36px;
  flex: none;
  display: flex;
  background: linear-gradient(#3b3e41 0, #202326 2px, #0a0b0c 17px, #030404);
`;
const StartButton = styled.div`
  width: 54px;
  padding: 5px 0 0 9px;
`;
const TaskRail = styled.div`
  width: 34px;
`;
const TaskList = styled.div`
  width: 825px;
  height: 36px;
  padding: 3px 0 2px;
  display: flex;
  background: linear-gradient(transparent 3px, #53606d 4px, #44505c 6px, #0a0b0c 7px, #0a0b0c 15px, #2d4d66 15px, #2d4d66 16px, #050607 16px, #050607 20px, #17212a 20px, #17212a 21px, #050607 21px, #050607 30px, #2c4d66 30px, #223c50 32px, #030404 32px);
`;
const TaskButton = styled.div`
  width: ${({ $width }) => $width}px;
  height: 31px;
  display: flex;
  flex: none;
  align-items: center;
  justify-content: center;
  background: ${({ $open }) => ($open ? 'linear-gradient(#3a3d41, #1d1f22 50%, #08090a 52%)' : 'none')};
  box-shadow: ${({ $open }) => ($open ? 'inset 0 0 0 1px #33373b' : 'none')};
`;
const RailEnd = styled.svg`
  margin-left: -6px;
`;
const Tray = styled.div`
  width: 142px;
  margin-left: -5px;
  padding-top: 2px;
  display: flex;
  align-items: center;
  justify-content: space-between;
`;
const Clock = styled.div`
  width: 88px;
  margin-left: 8px;
  padding-top: 3px;
  display: flex;
  flex-direction: column;
  align-items: center;
  font: 11px/16px 'DejaVu Sans', sans-serif;
  letter-spacing: 0.3px;
  color: #3f8fc9;
  white-space: nowrap;
  text-shadow: 0 0 1px #3f8fc9;
  span + span {
    letter-spacing: 1.9px;
  }
`;
const TrayPopup = styled.div`
  position: absolute;
  left: 889px;
  top: 514px;
  width: 130px;
  height: 126px;
  padding: 11px 10px 0;
`;
const PopupFrame = styled.svg`
  position: absolute;
  left: 0;
  top: 0;
`;
const PopupIcons = styled.div`
  position: relative;
  height: 68px;
  padding: 6px 13px 7px 11.5px;
  display: grid;
  grid-template-columns: 28px 28px 28px;
  align-items: center;
  justify-items: center;
  background: #424347;
`;
const BlueToothBadge = styled.div`
  width: 10px;
  height: 14px;
  display: flex;
  align-items: center;
  justify-content: center;
  border-radius: 5px;
  background: #163d5c;
  color: #fff;
`;
const Customize = styled.div`
  position: relative;
  height: 34px;
  padding: 9px 0 0 14px;
  font: 10.5px/18px 'DejaVu Sans', sans-serif;
  letter-spacing: 1.2px;
  color: #7eaad2;
  background: linear-gradient(#0c0e10 2px, #1f2224 3px, #1d2022 16px, #0b0d0f 17px);
`;
const Tooltip = styled.div`
  position: absolute;
  left: 97px;
  top: 29px;
  width: 48px;
  height: 16px;
  background: #0b0b0c;
  font: 10px/15px 'Open Sans', 'Noto Sans', sans-serif;
  text-align: center;
  color: #c0c0c0;
  box-shadow: 2px 2px 2px rgba(0, 0, 0, 0.45);
`;
export default App;
